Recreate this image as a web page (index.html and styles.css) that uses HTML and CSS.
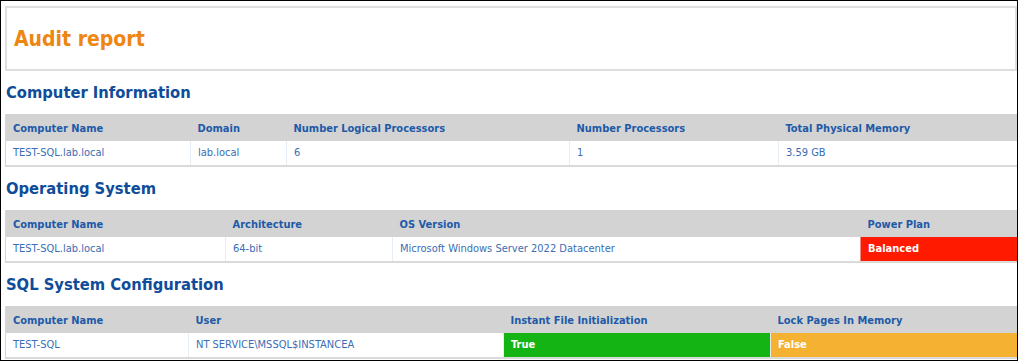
FILE: index.html
```html
<!DOCTYPE html>
<html lang="en">
<head>
<meta charset="utf-8">
<title>Audit report</title>
<link rel="stylesheet" href="styles.css">
</head>
<body>
<div class="frame">
  <div class="content">
    <div class="banner"><h1 class="title">Audit report</h1></div>

    <h2 class="section">Computer Information</h2>
    <table class="grid">
      <colgroup>
        <col class="w185"><col class="w96"><col class="w283"><col class="w209"><col class="w239">
      </colgroup>
      <thead>
        <tr><th>Computer Name</th><th>Domain</th><th>Number Logical Processors</th><th>Number Processors</th><th>Total Physical Memory</th></tr>
      </thead>
      <tbody>
        <tr><td>TEST-SQL.lab.local</td><td>lab.local</td><td>6</td><td>1</td><td>3.59 GB</td></tr>
      </tbody>
    </table>

    <h2 class="section">Operating System</h2>
    <table class="grid">
      <colgroup>
        <col class="w220"><col class="w167"><col class="w468"><col class="w157">
      </colgroup>
      <thead>
        <tr><th>Computer Name</th><th>Architecture</th><th>OS Version</th><th>Power Plan</th></tr>
      </thead>
      <tbody>
        <tr><td>TEST-SQL.lab.local</td><td>64-bit</td><td>Microsoft Windows Server 2022 Datacenter</td><td class="bad">Balanced</td></tr>
      </tbody>
    </table>

    <h2 class="section">SQL System Configuration</h2>
    <table class="grid">
      <colgroup>
        <col class="w183"><col class="w315"><col class="w267"><col class="w247">
      </colgroup>
      <thead>
        <tr><th>Computer Name</th><th>User</th><th>Instant File Initialization</th><th>Lock Pages In Memory</th></tr>
      </thead>
      <tbody>
        <tr><td>TEST-SQL</td><td>NT SERVICE\MSSQL$INSTANCEA</td><td class="good">True</td><td class="warn">False</td></tr>
      </tbody>
    </table>
  </div>
</div>
</body>
</html>
```

FILE: styles.css
```css
html, body {
  margin: 0;
  padding: 0;
  background: #ffffff;
}

body {
  font-family: "DejaVu Sans Condensed", "DejaVu Sans", Verdana, sans-serif;
  font-stretch: semi-condensed;
  font-size: 11px;
}

.frame {
  box-sizing: border-box;
  width: 1018px;
  height: 361px;
  border: 1px solid #000000;
  padding: 5px 0 0 4px;
  overflow: hidden;
  background: #ffffff;
}

.content {
  width: 1012px;
}

.banner {
  box-sizing: border-box;
  height: 65px;
  border: 2px solid #dedede;
  padding: 19px 7px 0 7px;
}

.title {
  margin: 0;
  font-size: 21px;
  line-height: 25px;
  font-weight: bold;
  color: #ee8612;
}

.section {
  margin: 12px 0 11px 1px;
  font-size: 16.4px;
  line-height: 20px;
  font-weight: bold;
  color: #0f4c99;
}

.grid {
  box-sizing: border-box;
  width: 1011px;
  table-layout: fixed;
  border-collapse: collapse;
  border-left: 1px solid #d6d6d6;
  border-right: 1px solid #d6d6d6;
  border-bottom: 2px solid #d9d9d9;
}

.grid th {
  background: #d3d3d3;
  color: #1d5aa8;
  font-weight: bold;
  text-align: left;
  padding: 8px 7px 6px 7px;
  line-height: 13px;
  white-space: nowrap;
}

.grid td {
  color: #3a6db4;
  padding: 5px 7px 6px 7px;
  line-height: 13px;
  border-left: 1px solid #e6edf4;
  white-space: nowrap;
}

.grid td:first-child {
  border-left: none;
}

.grid td.bad {
  background: #ff1a00;
  color: #ffffff;
  font-weight: bold;
  border-left: 1px solid #f08a80;
}

.grid td.good {
  background: #13b413;
  color: #ffffff;
  font-weight: bold;
}

.grid td.warn {
  background: #f5b131;
  color: #ffffff;
  font-weight: bold;
  border-left: 1px solid #e8e8e8;
}

.w96 { width: 96px; }
.w157 { width: 157px; }
.w167 { width: 167px; }
.w183 { width: 183px; }
.w185 { width: 185px; }
.w209 { width: 209px; }
.w220 { width: 220px; }
.w239 { width: 239px; }
.w247 { width: 247px; }
.w267 { width: 267px; }
.w283 { width: 283px; }
.w315 { width: 315px; }
.w468 { width: 468px; }
```
